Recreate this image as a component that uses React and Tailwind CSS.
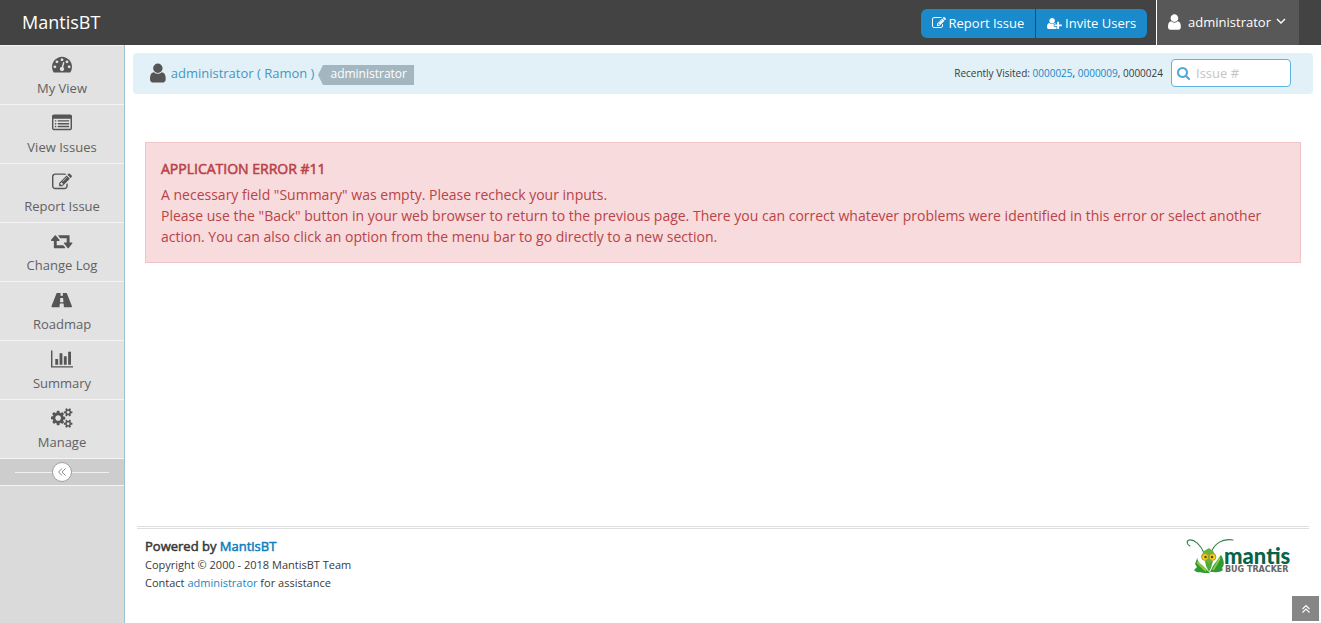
import React from "react";

const PATHS = {
  user: [1280, "M1280 1399q0 109-62.5 187t-150.5 78h-854q-88 0-150.5-78t-62.5-187q0-85 8.5-160.5t31.5-152 58.5-131 94-89 134.5-34.5q131 128 313 128t313-128q76 0 134.5 34.5t94 89 58.5 131 31.5 152 8.5 160.5zm-256-887q0 159-112.5 271.5t-271.5 112.5-271.5-112.5-112.5-271.5 112.5-271.5 271.5-112.5 271.5 112.5 112.5 271.5z"],
  userPlus: [2048, "M704 896q-159 0-271.5-112.5t-112.5-271.5 112.5-271.5 271.5-112.5 271.5 112.5 112.5 271.5-112.5 271.5-271.5 112.5zm960 128h352q13 0 22.5 9.5t9.5 22.5v192q0 13-9.5 22.5t-22.5 9.5h-352v352q0 13-9.5 22.5t-22.5 9.5h-192q-13 0-22.5-9.5t-9.5-22.5v-352h-352q-13 0-22.5-9.5t-9.5-22.5v-192q0-13 9.5-22.5t22.5-9.5h352v-352q0-13 9.5-22.5t22.5-9.5h192q13 0 22.5 9.5t9.5 22.5v352zm-736 224q0 52 38 90t90 38h256v238q-68 50-171 50h-874q-121 0-194-69t-73-190q0-53 3.5-103.5t14-109 26.5-108.5 43-97.5 62-81 85.5-53.5 111.5-20q19 0 39 17 79 61 154.5 91.5t164.5 30.5 164.5-30.5 154.5-91.5q20-17 39-17 132 0 217 96h-223q-52 0-90 38t-38 90v192z"],
  edit: [1792, "M888 1184l116-116-152-152-116 116v56h96v96h56zm440-720q-16-16-33 1l-350 350q-17 17-1 33t33-1l350-350q17-17 1-33zm80 594v190q0 119-84.5 203.5t-203.5 84.5h-832q-119 0-203.5-84.5t-84.5-203.5v-832q0-119 84.5-203.5t203.5-84.5h832q63 0 117 25 15 7 18 23 3 17-9 29l-49 49q-14 14-32 8-23-6-45-6h-832q-66 0-113 47t-47 113v832q0 66 47 113t113 47h832q66 0 113-47t47-113v-126q0-13 9-22l64-64q15-15 35-7t20 29zm-96-738l288 288-672 672h-288v-288zm444 132l-92 92-288-288 92-92q28-28 68-28t68 28l152 152q28 28 28 68t-28 68z"],
  search: [1664, "M1152 832q0-185-131.5-316.5t-316.5-131.5-316.5 131.5-131.5 316.5 131.5 316.5 316.5 131.5 316.5-131.5 131.5-316.5zm512 832q0 52-38 90t-90 38q-54 0-90-38l-343-342q-179 124-399 124-143 0-273.5-55.5t-225-150-150-225-55.5-273.5 55.5-273.5 150-225 225-150 273.5-55.5 273.5 55.5 225 150 150 225 55.5 273.5q0 220-124 399l343 343q37 37 37 90z"],
  dashboard: [1792, "M384 1152q0-53-37.5-90.5t-90.5-37.5-90.5 37.5-37.5 90.5 37.5 90.5 90.5 37.5 90.5-37.5 37.5-90.5zm192-448q0-53-37.5-90.5t-90.5-37.5-90.5 37.5-37.5 90.5 37.5 90.5 90.5 37.5 90.5-37.5 37.5-90.5zm428 481l101-382q6-26-7.5-48.5t-38.5-29.5-48 6.5-30 39.5l-101 382q-60 5-107 43.5t-63 98.5q-20 77 20 146t117 89 146-20 89-117q16-60-6-117t-72-91zm660-33q0-53-37.5-90.5t-90.5-37.5-90.5 37.5-37.5 90.5 37.5 90.5 90.5 37.5 90.5-37.5 37.5-90.5zm-640-640q0-53-37.5-90.5t-90.5-37.5-90.5 37.5-37.5 90.5 37.5 90.5 90.5 37.5 90.5-37.5 37.5-90.5zm448 192q0-53-37.5-90.5t-90.5-37.5-90.5 37.5-37.5 90.5 37.5 90.5 90.5 37.5 90.5-37.5 37.5-90.5zm320 448q0 261-141 483-19 29-54 29h-1402q-35 0-54-29-141-221-141-483 0-182 71-348t191-286 286-191 348-71 348 71 286 191 191 286 71 348z"],
  list: [1792, "M384 1184v64q0 13-9.5 22.5t-22.5 9.5h-64q-13 0-22.5-9.5t-9.5-22.5v-64q0-13 9.5-22.5t22.5-9.5h64q13 0 22.5 9.5t9.5 22.5zm0-256v64q0 13-9.5 22.5t-22.5 9.5h-64q-13 0-22.5-9.5t-9.5-22.5v-64q0-13 9.5-22.5t22.5-9.5h64q13 0 22.5 9.5t9.5 22.5zm0-256v64q0 13-9.5 22.5t-22.5 9.5h-64q-13 0-22.5-9.5t-9.5-22.5v-64q0-13 9.5-22.5t22.5-9.5h64q13 0 22.5 9.5t9.5 22.5zm1152 512v64q0 13-9.5 22.5t-22.5 9.5h-960q-13 0-22.5-9.5t-9.5-22.5v-64q0-13 9.5-22.5t22.5-9.5h960q13 0 22.5 9.5t9.5 22.5zm0-256v64q0 13-9.5 22.5t-22.5 9.5h-960q-13 0-22.5-9.5t-9.5-22.5v-64q0-13 9.5-22.5t22.5-9.5h960q13 0 22.5 9.5t9.5 22.5zm0-256v64q0 13-9.5 22.5t-22.5 9.5h-960q-13 0-22.5-9.5t-9.5-22.5v-64q0-13 9.5-22.5t22.5-9.5h960q13 0 22.5 9.5t9.5 22.5zm128 704v-832q0-13-9.5-22.5t-22.5-9.5h-1472q-13 0-22.5 9.5t-9.5 22.5v832q0 13 9.5 22.5t22.5 9.5h1472q13 0 22.5-9.5t9.5-22.5zm128-1088v1088q0 66-47 113t-113 47h-1472q-66 0-113-47t-47-113v-1088q0-66 47-113t113-47h1472q66 0 113 47t47 113z"],
  retweet: [1920, "M1280 1504q0 13-9.5 22.5t-22.5 9.5h-960q-8 0-13.5-2t-9-7-5.5-8-3-11.5-1-11.5v-600h-192q-26 0-45-19t-19-45q0-24 15-41l320-384q19-22 49-22t49 22l320 384q15 17 15 41 0 26-19 45t-45 19h-192v384h576q16 0 25 11l160 192q7 10 7 21zm640-416q0 24-15 41l-320 384q-20 23-49 23t-49-23l-320-384q-15-17-15-41 0-26 19-45t45-19h192v-384h-576q-16 0-25-12l-160-192q-7-9-7-20 0-13 9.5-22.5t22.5-9.5h960q8 0 13.5 2t9 7 5.5 8 3 11.5 1 11.5v600h192q26 0 45 19t19 45z"],
  road: [1920, "M1111 1066v-4l-24-320q-1-13-11-22.5t-23-9.5h-186q-13 0-23 9.5t-11 22.5l-24 320v4q-1 12 8 20t21 8h244q12 0 21-8t8-20zm764 408q0 62-46 62h-704q13 0 22-9.5t8-22.5l-20-256q-1-13-11-22.5t-23-9.5h-282q-13 0-23 9.5t-11 22.5l-20 256q-1 13 8 22.5t22 9.5h-704q-46 0-46-62 0-52 30-116l417-1044q8-21 26.5-35.5t38.5-14.5h339q-13 0-23 9.5t-11 22.5l-15 192q-1 14 8 23t22 9h166q13 0 22-9t8-23l-15-192q-1-13-11-22.5t-23-9.5h339q20 0 38.5 14.5t26.5 35.5l417 1044q30 64 30 116z"],
  chart: [2048, "M640 896v512h-256v-512h256zm384-512v1024h-256v-1024h256zm1024 1152v128h-2048v-1536h128v1408h1920zm-640-896v768h-256v-768h256zm384-384v1152h-256v-1152h256z"],
  cogs: [1920, "M896 896q0-106-75-181t-181-75-181 75-75 181 75 181 181 75 181-75 75-181zm768 512q0-52-38-90t-90-38-90 38-38 90q0 53 37.5 90.5t90.5 37.5 90.5-37.5 37.5-90.5zm0-1024q0-52-38-90t-90-38-90 38-38 90q0 53 37.5 90.5t90.5 37.5 90.5-37.5 37.5-90.5zm-384 421v185q0 10-7 19.5t-16 10.5l-155 24q-11 35-32 76 34 48 90 115 7 11 7 20 0 12-7 19-23 30-82.5 89.5t-78.5 59.5q-11 0-21-7l-115-90q-37 19-77 31-11 108-23 155-7 24-30 24h-186q-11 0-20-7.5t-10-17.5l-23-153q-34-10-75-31l-118 89q-7 7-20 7-11 0-21-8-144-133-144-160 0-9 7-19 10-14 41-53t47-61q-23-44-35-82l-152-24q-10-1-17-9.5t-7-19.5v-185q0-10 7-19.5t16-10.5l155-24q11-35 32-76-34-48-90-115-7-11-7-20 0-12 7-20 22-30 82-89t79-59q11 0 21 7l115 90q34-18 77-32 11-108 23-154 7-24 30-24h186q11 0 20 7.5t10 17.5l23 153q34 10 75 31l118-89q8-7 20-7 11 0 21 8 144 133 144 160 0 8-7 19-12 16-42 54t-45 60q23 48 34 82l152 23q10 2 17 10.5t7 19.5zm640 533v140q0 16-149 31-12 27-30 52 51 113 51 138 0 4-4 7-122 71-124 71-8 0-46-47t-52-68q-20 2-30 2t-30-2q-14 21-52 68t-46 47q-2 0-124-71-4-3-4-7 0-25 51-138-18-25-30-52-149-15-149-31v-140q0-16 149-31 13-29 30-52-51-113-51-138 0-4 4-7 4-2 35-20t59-34 30-16q8 0 46 46.5t52 67.5q20-2 30-2t30 2q51-71 92-112l6-2q4 0 124 70 4 3 4 7 0 25-51 138 17 23 30 52 149 15 149 31zm0-1024v140q0 16-149 31-12 27-30 52 51 113 51 138 0 4-4 7-122 71-124 71-8 0-46-47t-52-68q-20 2-30 2t-30-2q-14 21-52 68t-46 47q-2 0-124-71-4-3-4-7 0-25 51-138-18-25-30-52-149-15-149-31v-140q0-16 149-31 13-29 30-52-51-113-51-138 0-4 4-7 4-2 35-20t59-34 30-16q8 0 46 46.5t52 67.5q20-2 30-2t30 2q51-71 92-112l6-2q4 0 124 70 4 3 4 7 0 25-51 138 17 23 30 52 149 15 149 31z"],
};

function Icon({ name, className }) {
  const [width, d] = PATHS[name];
  return (
    <svg viewBox={`0 0 ${width} 1792`} fill="currentColor" aria-hidden="true" className={`w-auto shrink-0 ${className}`}>
      <path d={d} />
    </svg>
  );
}

const MENU = [
  ["dashboard", "My View"],
  ["list", "View Issues"],
  ["edit", "Report Issue"],
  ["retweet", "Change Log"],
  ["road", "Roadmap"],
  ["chart", "Summary"],
  ["cogs", "Manage"],
];

function Navbar() {
  return (
    <header className="flex h-[45px] items-center justify-between bg-[#434343] px-[22px] text-white">
      <a href="#home" className="pb-[2px] text-lg">MantisBT</a>
      <div className="flex h-full items-center">
        <div className="flex gap-px pt-px">
          <a href="#report" className="flex h-[29px] items-center gap-[3px] rounded-l-md bg-[#1b8acb] px-[11px]">
            <Icon name="edit" className="h-[14px]" />
            Report Issue
          </a>
          <a href="#invite" className="flex h-[29px] items-center gap-[3px] rounded-r-md bg-[#1b8acb] px-[11px]">
            <Icon name="userPlus" className="h-[13px]" />
            Invite Users
          </a>
        </div>
        <button type="button" className="ml-[9px] flex h-full items-center border-l border-white bg-[#585858] pr-[13px] pb-[2px] pl-[11px]">
          <Icon name="user" className="h-[18px]" />
          <span className="ml-[7px]">administrator</span>
          <svg viewBox="0 0 10 7" aria-hidden="true" className="ml-[5px] h-[7px] w-[10px]" fill="none" stroke="currentColor" strokeWidth="1.4">
            <path d="M1 1l4 4 4-4" />
          </svg>
        </button>
      </div>
    </header>
  );
}

function Sidebar() {
  return (
    <aside className="w-[125px] shrink-0 border-r border-[#9cc3d5] bg-[#dadada] text-[#616161]">
      <nav>
        {MENU.map(([icon, label]) => (
          <a key={label} href="#menu" className="flex h-[59px] flex-col items-center border-t border-[#f4f4f4] bg-[#e2e2e2] pt-2">
            <Icon name={icon} className="h-5 text-[#555]" />
            <span className="mt-1 leading-5">{label}</span>
          </a>
        ))}
      </nav>
      <div className="flex h-7 items-center border-y border-[#f4f4f4] bg-[#cdcdcd] px-[15px]">
        <span className="h-px flex-1 bg-[#f0f0f0]" />
        <button type="button" aria-label="Collapse sidebar" className="flex size-5 items-center justify-center rounded-full border border-[#a0a0a0] bg-white text-[#8a8a8a]">
          <svg viewBox="0 0 10 10" className="size-[10px]" fill="none" stroke="currentColor" strokeWidth="1">
            <path d="M5 1.500L1.500 5L5 8.500M8.500 1.500L5 5L8.500 8.500" />
          </svg>
        </button>
        <span className="h-px flex-1 bg-[#f0f0f0]" />
      </div>
    </aside>
  );
}

function Breadcrumbs() {
  return (
    <div className="flex h-[41px] items-center justify-between rounded bg-[#e2f1f8] pr-[22px] pb-px pl-[17px]">
      <div className="flex items-center">
        <Icon name="user" className="h-[22px] text-[#555]" />
        <a href="#account" className="ml-[5px] text-[#4596c4]">administrator ( Ramon )</a>
        <span className="ml-1 flex items-center pt-1">
          <svg viewBox="0 0 5 20" className="h-5 w-[5px]" fill="#a4b6c0" aria-hidden="true">
            <path d="M5 0v20L0 10z" />
          </svg>
          <span className="h-5 bg-[#a4b6c0] px-[7px] text-xs leading-[18px] text-white">administrator</span>
        </span>
      </div>
      <div className="flex items-center gap-2">
        <div className="text-[10px] text-[#393939]">
          Recently Visited: <a href="#25" className="text-[#1b85c4]">0000025</a>, <a href="#9" className="text-[#1b85c4]">0000009</a>, 0000024
        </div>
        <label className="flex h-7 w-[120px] items-center gap-[6px] rounded border border-[#5cb5e0] bg-white pl-[5px]">
          <Icon name="search" className="h-[14px] text-[#4faadb]" />
          <input type="text" aria-label="Issue number" placeholder="Issue #" className="w-full min-w-0 bg-transparent outline-none placeholder:text-[#c4c4c4]" />
        </label>
      </div>
    </div>
  );
}

function Logo() {
  return (
    <svg viewBox="0 0 108 40" className="h-10 w-[108px]" role="img" aria-label="Mantis Bug Tracker">
      <g fill="none" stroke="#2f8049" strokeWidth="1.100" strokeLinecap="round">
        <path d="M19 17C16 9 9 3 4 4C1 5 2 9 5 10" />
        <path d="M26 17C29 8 37 2 48 4" />
      </g>
      <path d="M13 20C11 23 14 27 17 29L25 37C18 37 11 37 9 34L12 31L10 28Z" fill="#2f9a35" />
      <path d="M36 19C39 24 40 29 37 32L38 34C35 37 30 36 25 36L28 30Z" fill="#2f9a35" />
      <path d="M20 25H28L26 32L24 36L21 30Z" fill="#4dac36" />
      <path d="M12 26L21 35M35 22L28 34" stroke="#8fcc3c" strokeWidth="1.800" fill="none" />
      <path d="M19 15L24 12L28 15L31 20L24 28L16 20Z" fill="#68b33a" />
      <circle cx="20" cy="21" r="3.400" fill="#f3cf22" stroke="#a58e22" strokeWidth=".8" />
      <circle cx="27.500" cy="21" r="3.400" fill="#f3cf22" stroke="#a58e22" strokeWidth=".8" />
      <circle cx="20.500" cy="21" r="1.200" fill="#5b3d10" />
      <circle cx="27" cy="21" r="1.200" fill="#5b3d10" />
      <text x="39" y="28" fontSize="22" fontWeight="900" fill="#07644a" fontFamily="Lato, sans-serif">mantis</text>
      <text x="40" y="36" fontSize="8" fontWeight="700" fill="#666" fontFamily="DejaVu Sans, sans-serif">BUG TRACKER</text>
    </svg>
  );
}

export default function App() {
  return (
    <div className="flex min-h-screen flex-col bg-white font-['Open_Sans',sans-serif] text-[13px] leading-5 text-[#393939]">
      <Navbar />
      <div className="flex flex-1">
        <Sidebar />
        <div className="flex min-w-0 flex-1 flex-col px-2 pt-2">
          <Breadcrumbs />
          <main className="mx-3 mt-12 border border-[#efc4ca] bg-[#f7dbdd] px-[15px] pt-[15px] pb-[15px] text-sm leading-[21px] text-[#b94348]">
            <p className="mb-[5px] [-webkit-text-stroke:0.04em_currentColor]">APPLICATION ERROR #11</p>
            <p>A necessary field "Summary" was empty. Please recheck your inputs.</p>
            <p>Please use the "Back" button in your web browser to return to the previous page. There you can correct whatever problems were identified in this error or select another action. You can also click an option from the menu bar to go directly to a new section.</p>
          </main>
          <footer className="mx-1 mt-auto flex justify-between border-t-3 border-double border-[#dfdfdf] px-2 pt-[7px] pb-[31px]">
            <div>
              <p className="[-webkit-text-stroke:0.04em_currentColor]">Powered by <a href="#mantis" className="text-[#0d80bf] [-webkit-text-stroke-color:#0d80bf]">MantisBT</a></p>
              <p className="text-[11px] leading-[18px]">Copyright © 2000 - 2018 MantisBT Team</p>
              <p className="text-[11px] leading-[18px]">Contact <a href="#contact" className="text-[#1b85c4]">administrator</a> for assistance</p>
            </div>
            <a href="#mantis" className="pr-2"><Logo /></a>
          </footer>
        </div>
      </div>
      <button type="button" aria-label="Scroll to top" className="fixed right-[2px] bottom-[2px] flex h-[25px] w-[27px] items-center justify-center bg-[#868686] text-white">
        <svg viewBox="0 0 10 10" className="size-[10px]" fill="none" stroke="currentColor" strokeWidth="1.100">
          <path d="M1.500 5L5 1.500L8.500 5M1.500 8.500L5 5L8.500 8.500" />
        </svg>
      </button>
    </div>
  );
}
